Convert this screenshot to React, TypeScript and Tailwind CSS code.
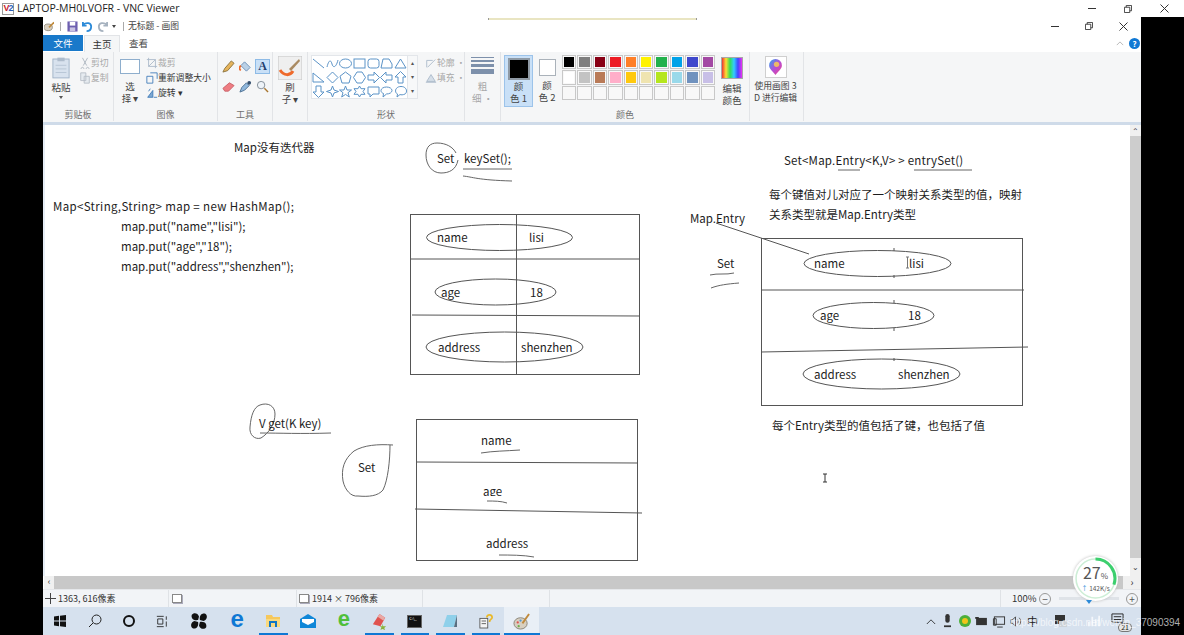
import type { ReactNode } from "react";

const FONT = "[font-family:'Noto_Sans_CJK_SC','Noto_Sans',sans-serif]";

const row1 = ["#000000", "#7f7f7f", "#880015", "#ed1c24", "#ff7f27", "#fff200", "#22b14c", "#00a2e8", "#3f48cc", "#a349a4"];
const row2 = ["#ffffff", "#c3c3c3", "#b97a57", "#ffaec9", "#ffc90e", "#efe4b0", "#b5e61d", "#99d9ea", "#7092be", "#c8bfe7"];
const row3 = Array.from({ length: 10 }, () => "transparent");

// 形状 gallery, each drawn in a 13x13 box
const shapes: ReactNode[] = [
	<path d="M1 2 12 11" />,
	<path d="M1 10C3 2 5 3 6 7s4 4 6-4" />,
	<ellipse cx="6.5" cy="6.5" rx="6" ry="4.5" />,
	<rect x="1" y="2" width="11" height="9" />,
	<rect x="1" y="2" width="11" height="9" rx="2.5" />,
	<path d="M1 11 3 2h6l3 5v4z" />,
	<path d="M6.5 2 12 11H1z" />,
	<path d="M1 2 12 11H1z" />,
	<path d="M6.5 1 12 6.5 6.5 12 1 6.5z" />,
	<path d="M6.5 1 12 5.2 10 12H3L1 5.2z" />,
	<path d="M4 1h5l3.5 5.5L9 12H4L.5 6.5z" />,
	<path d="M1 4h6V1l5.5 5.5L7 12V9H1z" />,
	<path d="M12 4H6V1L.5 6.5 6 12V9h6z" />,
	<path d="M4 12V6H1l5.5-5.5L12 6H9v6z" />,
	<path d="M4 1v6H1l5.5 5.5L12 7H9V1z" />,
	<path d="M6.5 1 8 5l4.5 1.5L8 8l-1.5 4L5 8 .5 6.5 5 5z" />,
	<path d="M6.5 1 8 5h4.5L9 7.7l1.3 4.3-3.8-2.6L2.7 12 4 7.7.5 5H5z" />,
	<path d="M6.5 1 8 3.7h4L10 6.5l2 2.8H8L6.5 12 5 9.3H1l2-2.8-2-2.8h4z" />,
	<path d="M1 2h11v7H6l-3 3V9H1z" />,
	<path d="M6.5 2c3 0 5.5 1.5 5.5 3.5S9.5 9 6.5 9L3 12l.5-3.5C2 8 1 7 1 5.5 1 3.5 3.5 2 6.5 2z" />,
	<path d="M3 3c1-2 7-2 8 0 2 1 2 5 0 6-2 1-4 1-5 .5L3 12l.5-3C1 8 1 4 3 3z" />,
];

function Group({ label, className, children }: { label: string; className: string; children: ReactNode }) {
	return (
		<div className={`flex flex-col border-r border-[#e2e4e7] h-[69px] shrink-0 ${className}`}>
			<div className="flex-1 min-h-0 flex">{children}</div>
			<div className="h-[14px] pt-px text-center text-[9px] leading-[13px] text-[#6f6f6f]">{label}</div>
		</div>
	);
}

function SmallAction({ icon, text, dim }: { icon: ReactNode; text: string; dim?: boolean }) {
	return (
		<div className={`flex items-center h-[15px] text-[8.8px] whitespace-nowrap ${dim ? "text-[#a8a8a8]" : "text-[#333]"}`}>
			<svg viewBox="0 0 14 14" className="w-[12px] h-[12px] shrink-0" fill="none" stroke="#6d8fb5">
				{icon}
			</svg>
			{text}
		</div>
	);
}

function Ribbon() {
	return (
		<div className="h-[70px] bg-[#f5f6f7] border-b-[3px] border-[#cfdbe9] flex box-content text-[#444]">
			<Group label="剪贴板" className="w-[71px]">
				<div className="w-[34px] ml-[1px] flex flex-col items-center pt-[5px]">
					<svg viewBox="0 0 20 24" className="w-[18px] h-[22px]">
						<rect x="1" y="2" width="18" height="21" fill="#d8e2ee" stroke="#9fb1c6" />
						<rect x="6" y="0.5" width="8" height="4" fill="#aebccc" />
						<path d="M4 9h12M4 13h12M4 17h12" stroke="#b6c4d4" />
					</svg>
					<div className="text-[9.5px] leading-[12px] mt-[2px] text-[#444]">粘贴</div>
					<div className="w-0 h-0 mt-[3px] border-x-[2px] border-t-[3px] border-x-transparent border-t-[#555]" />
				</div>
				<div className="flex flex-col pt-[3px] ml-[1px]">
					<SmallAction dim text="剪切" icon={<path d="M4 1l5 9M10 1 5 10M4 12a1.5 1.5 0 1 0 .1 0M10 12a1.5 1.5 0 1 0 .1 0" stroke="#a9b2bc" />} />
					<SmallAction dim text="复制" icon={<path d="M2 1h6v9H2zM6 5h6v8H6z" stroke="#b4bcc6" fill="#e6ebf0" />} />
				</div>
			</Group>
			<Group label="图像" className="w-[104px]">
				<div className="w-[32px] flex flex-col items-center pt-[7px]">
					<div className="w-[20px] h-[15px] border border-[#8eaecd] bg-white" />
					<div className="text-[9.5px] leading-[12px] mt-[6px] text-center text-[#444]">选<br />择 ▾</div>
				</div>
				<div className="flex flex-col pt-[3px]">
					<SmallAction dim text="裁剪" icon={<path d="M3 1v10h10M1 3h10v10M3 11l8-8" stroke="#a9b8c8" />} />
					<SmallAction text="重新调整大小" icon={<path d="M1 5h7v8H1zM5 1h8v7" stroke="#3b78b8" />} />
					<SmallAction text="旋转 ▾" icon={<path d="M2 12 8 4v8zM9 12h4M3 5l2-3" stroke="#3b78b8" fill="#7fa8d2" />} />
				</div>
			</Group>
			<Group label="工具" className="w-[55px]">
				<div className="grid grid-cols-3 grid-rows-2 w-[51px] h-[40px] ml-[2px] mt-[4px] place-items-center">
					<svg viewBox="0 0 14 14" className="w-[13px] h-[13px]"><path d="M1 13 3 9l7-8 3 2.5-7 8z" fill="#e6b45c" stroke="#8a7440" /></svg>
					<svg viewBox="0 0 14 14" className="w-[13px] h-[13px]"><path d="M6 2l6 6-4 4-6-6z" fill="#b9d0e6" stroke="#6d8fb5" /><path d="M2 6C0 8 0 10 2 11" stroke="#ef6a2b" strokeWidth="2" fill="none" /></svg>
					<div className="w-[15px] h-[15px] bg-[#c9e0f7] border border-[#8ebbe6] flex items-center justify-center text-[12px] leading-none font-bold [font-family:'Liberation_Serif',serif] text-[#1f3f6f]">A</div>
					<svg viewBox="0 0 14 14" className="w-[13px] h-[13px]"><path d="M1 9 8 3l5 3-6 6-4 0z" fill="#ee7c82" stroke="#c9636a" /></svg>
					<svg viewBox="0 0 14 14" className="w-[13px] h-[13px]"><path d="M1 13 3 8l5-5 3 3-5 5z" fill="#8fb7dc" stroke="#4d6f92" /><circle cx="11" cy="3" r="2" fill="#36506e" /></svg>
					<svg viewBox="0 0 14 14" className="w-[13px] h-[13px]" fill="none" stroke="#7f8a95"><circle cx="5.5" cy="5.5" r="4" fill="#eef3f8" /><path d="M9 9l4 4" strokeWidth="1.5" stroke="#a8762f" /></svg>
				</div>
			</Group>
			<Group label="" className="w-[35px]">
				<div className="flex flex-col items-center w-full pt-[4px]">
					<svg viewBox="0 0 24 24" className="w-[24px] h-[24px]">
						<rect width="24" height="24" rx="1" fill="#efefef" stroke="#c4c4c4" />
						<path d="M2 14c4 6 10 6 13 1" fill="none" stroke="#ef6a2b" strokeWidth="3" />
						<path d="M11 13 21 3l1 2-9 10z" fill="#a98a62" />
					</svg>
					<div className="text-[9.5px] leading-[12px] mt-[1px] text-center text-[#444]">刷<br />子 ▾</div>
				</div>
			</Group>
			<Group label="形状" className="w-[157px]">
				<div className="flex mt-[3px] ml-[3px] h-[44px]">
					<div className="w-[97px] grid grid-cols-7 bg-white border border-[#e3e6ea] place-items-center">
						{shapes.map((s, i) => (
							<svg key={i} viewBox="0 0 13 13" className="w-[13px] h-[13px]" fill="none" stroke="#5b93c7">
								{s}
							</svg>
						))}
					</div>
					<div className="w-[10px] bg-[#f7f8f9] border border-l-0 border-[#e3e6ea] text-[6px] leading-[14px] text-center text-[#555]">▴<br />▾<br />▾</div>
				</div>
				<div className="flex flex-col ml-[7px] pt-[3px]">
					<SmallAction dim text="轮廓 ·" icon={<path d="M2 12V4h7M3 12l9-9" stroke="#a9b8c8" />} />
					<SmallAction dim text="填充 ·" icon={<path d="M2 11l5-8 5 8zM1 12h12" stroke="#a9b8c8" fill="#d5dee8" />} />
				</div>
			</Group>
			<Group label="" className="w-[36px]">
				<div className="flex flex-col items-center w-full pt-[3px]">
					<div className="w-[23px] flex flex-col gap-[2px] mt-[2px]">
						<div className="h-px bg-[#7d90ab]" />
						<div className="h-[2px] bg-[#7d90ab]" />
						<div className="h-[3px] bg-[#7d90ab]" />
						<div className="h-[5px] bg-[#7d90ab]" />
					</div>
					<div className="text-[9.5px] leading-[12px] mt-[6px] text-center text-[#a8a8a8]">粗<br />细 ·</div>
				</div>
			</Group>
			<Group label="颜色" className="w-[249px]">
				<div className="w-[29px] h-[52px] mt-[3px] ml-[3px] bg-[#c9e0f7] border border-[#9cc3ea] flex flex-col items-center pt-[2px]">
					<div className="w-[22px] h-[22px] bg-black border-[2px] border-[#8f9aa5]" />
					<div className="text-[9.5px] leading-[12px] text-center text-[#444]">颜<br />色 1</div>
				</div>
				<div className="w-[28px] flex flex-col items-center pt-[7px]">
					<div className="w-[17px] h-[17px] bg-white border border-[#aab2ba]" />
					<div className="text-[9.5px] leading-[12px] mt-[3px] text-center text-[#444]">颜<br />色 2</div>
				</div>
				<div className="flex flex-col gap-px mt-[3px] ml-[1px]">
					{[row1, row2, row3].map((colors, r) => (
						<div key={r} className="flex gap-px">
							{colors.map((c, i) => (
								<div key={i} className="w-[14.4px] h-[14.4px] border border-[#c8c8c8] bg-[#f8f8f8] p-px">
									<div className="w-full h-full" style={{ background: c }} />
								</div>
							))}
						</div>
					))}
				</div>
				<div className="w-[30px] ml-[2px] flex flex-col items-center pt-[5px]">
					<div className="w-[22px] h-[22px] border border-[#a8a8a8] bg-[linear-gradient(90deg,#e33,#fd3,#3d5,#3cf,#44f,#e3e)]" />
					<div className="text-[9.5px] leading-[12px] mt-[3px] text-center text-[#444]">编辑<br />颜色</div>
				</div>
			</Group>
			<Group label="" className="w-[54px]">
				<div className="flex flex-col items-center w-full pt-[4px] pr-[2px]">
					<div className="w-[22px] h-[22px] bg-white border border-[#cfcfcf] flex items-center justify-center">
						<svg viewBox="0 0 14 16" className="w-[15px] h-[17px]">
							<defs>
								<linearGradient id="drop" x1="0" y1="0" x2="1" y2="1">
									<stop offset="0" stopColor="#2aa8f0" />
									<stop offset="0.5" stopColor="#b24fd8" />
									<stop offset="1" stopColor="#f4408a" />
								</linearGradient>
							</defs>
							<path d="M7 15C4 11 1 9 1 6a6 6 0 0 1 12 0c0 3-3 5-6 9z" fill="url(#drop)" />
							<circle cx="8" cy="5" r="2.5" fill="#ffd24a" opacity="0.8" />
						</svg>
					</div>
					<div className="text-[8.8px] leading-[12px] mt-[2px] text-center whitespace-nowrap text-[#444]">使用画图 3<br />D 进行编辑</div>
				</div>
			</Group>
			<div className="flex-1" />
		</div>
	);
}

function Canvas() {
	const text = "absolute whitespace-nowrap text-[11.5px] leading-[16px] text-[#1c1c1c]";
	return (
		<div className="relative flex-1 min-w-0 bg-white overflow-hidden ml-[2px]">
			<svg viewBox="45 125 1085 451" className="absolute inset-0 w-full h-full" fill="none" stroke="#555" strokeWidth="1">
				{/* left table */}
				<rect x="410.5" y="214.5" width="229" height="160" />
				<path d="M516.5 215V374M411 259h229M412 315l228 1" />
				<ellipse cx="499.5" cy="237.5" rx="73" ry="13" />
				<ellipse cx="495.5" cy="292" rx="60.5" ry="13" />
				<ellipse cx="504.5" cy="347" rx="78.5" ry="15" />
				<path d="M456 153C453 147 446 143 437 143 430 143 426 147 426 155 426 165 432 173 441 173 449 173 456 170 458 160" stroke="#666" />
				<path d="M463 169h49M463 176c10 1 14 4 49 5" stroke="#666" />
				{/* right table */}
				<rect x="761.5" y="238.5" width="261" height="167" />
				<path d="M761 290h263M761 352l267-5" />
				<ellipse cx="877.5" cy="263.5" rx="73.5" ry="13" />
				<ellipse cx="873.5" cy="315.5" rx="60.5" ry="13" />
				<ellipse cx="881.5" cy="374" rx="78.5" ry="15" />
				<path d="M894 248v3M894 275v3M894 300v3M894 328v3M894 358v3" />
				<path d="M716 223l93 31" />
				<path d="M838 170h22M914 170h58M710 275c8-2 16 0 24-2M711 288c8-3 16-4 28-5" stroke="#666" />
				{/* bottom table */}
				<rect x="416.5" y="419.5" width="221" height="141" />
				<path d="M417 462l221 1M415 509l227 4" />
				<path d="M481 453c12-2 25-2 39-3M487 501c7 0 14 0 20 2M499 555c10 0 25 0 35 2" stroke="#666" />
				{/* V blob and Set blob */}
				<path d="M260 405c-6 2-9 10-10 22-1 8 5 13 11 11 8-5 14-14 14-24 0-8-7-12-15-9z" stroke="#666" />
				<path d="M260 433c20 0 40 1 71 0" stroke="#666" />
				<path d="M393 445c-15-1-29 0-39 6-10 8-13 18-11 30 2 9 8 16 15 15 11 1 20 0 25-6 5-10 7-30 7-45" stroke="#666" />
				{/* text cursors */}
				<path d="M823 474h4M825 474v8M823 482h4" stroke="#333" />
				<path d="M906 257h3M907.5 257v11M906 268h3" stroke="#777" />
			</svg>

			<div className={`${text} left-[189px] top-[14px]`}>Map没有迭代器</div>
			<div className={`${text} left-[392px] top-[25px]`}>Set</div>
			<div className={`${text} left-[419px] top-[25px]`}>keySet();</div>
			<div className={`${text} left-[739px] top-[27px] tracking-[0.2px]`}>Set&lt;Map.Entry&lt;K,V&gt; &gt; entrySet()</div>
			<div className={`${text} left-[724px] top-[61px]`}>每个键值对儿对应了一个映射关系类型的值，映射</div>
			<div className={`${text} left-[724px] top-[81px]`}>关系类型就是Map.Entry类型</div>
			<div className={`${text} left-[645px] top-[85px]`}>Map.Entry</div>
			<div className={`${text} left-[8px] top-[73px] tracking-[0.35px]`}>Map&lt;String,String&gt; map = new HashMap();</div>
			<div className={`${text} left-[76px] top-[93px]`}>map.put("name","lisi");</div>
			<div className={`${text} left-[76px] top-[113px]`}>map.put("age","18");</div>
			<div className={`${text} left-[76px] top-[133px]`}>map.put("address","shenzhen");</div>

			<div className={`${text} left-[392px] top-[104px]`}>name</div>
			<div className={`${text} left-[484px] top-[104px]`}>lisi</div>
			<div className={`${text} left-[396px] top-[159px]`}>age</div>
			<div className={`${text} left-[485px] top-[159px]`}>18</div>
			<div className={`${text} left-[393px] top-[214px]`}>address</div>
			<div className={`${text} left-[476px] top-[214px]`}>shenzhen</div>

			<div className={`${text} left-[672px] top-[130px]`}>Set</div>
			<div className={`${text} left-[769px] top-[130px]`}>name</div>
			<div className={`${text} left-[864px] top-[130px]`}>lisi</div>
			<div className={`${text} left-[775px] top-[182px]`}>age</div>
			<div className={`${text} left-[863px] top-[182px]`}>18</div>
			<div className={`${text} left-[769px] top-[241px]`}>address</div>
			<div className={`${text} left-[853px] top-[241px]`}>shenzhen</div>
			<div className={`${text} left-[727px] top-[292px]`}>每个Entry类型的值包括了键，也包括了值</div>

			<div className={`${text} left-[214px] top-[290px]`}>V get(K key)</div>
			<div className={`${text} left-[313px] top-[334px]`}>Set</div>
			<div className={`${text} left-[436px] top-[307px]`}>name</div>
			<div className={`${text} left-[438px] top-[358px] h-[13px] overflow-hidden`}>age</div>
			<div className={`${text} left-[441px] top-[410px]`}>address</div>
		</div>
	);
}

function Taskbar() {
	const slot = "w-[35.5px] h-full flex items-center justify-center shrink-0";
	const tray = "w-[17px] flex items-center justify-center shrink-0";
	return (
		<div className="relative h-[28px] bg-[#d6e1ee] flex items-center">
			<div className={`${slot} ml-[-1px]`}>
				<svg viewBox="0 0 12 12" className="w-[12px] h-[12px]" fill="#111"><path d="M0 1.5 5 .8V5.5H0zM6 .7 12 0V5.5H6zM0 6.5H5V11.2L0 10.5zM6 6.5H12V12L6 11.3z" /></svg>
			</div>
			<div className={slot}>
				<svg viewBox="0 0 14 14" className="w-[14px] h-[14px]" fill="none" stroke="#222"><circle cx="8.5" cy="5.5" r="4.5" /><path d="M5 9 1 13" /></svg>
			</div>
			<div className={`${slot} ml-[-2px]`}>
				<div className="w-[12px] h-[12px] rounded-full border-[2px] border-[#111]" />
			</div>
			<div className={`${slot} ml-[-2px]`}>
				<svg viewBox="0 0 14 14" className="w-[12px] h-[13px]" fill="none" stroke="#222"><path d="M1 1h8M1 13h8M2 4h6v6H2zM12 1v4M12 7v6" /></svg>
			</div>
			<div className={`${slot} ml-[1px]`}>
				<svg viewBox="0 0 20 20" className="w-[18px] h-[18px]" fill="#111"><path d="M9 9C3 10 1 6 2 3c2-3 7-2 8 2zM11 9c-1-6 3-8 6-7 3 2 2 7-2 8zM11 11c6-1 8 3 7 6-2 3-7 2-8-2zM9 11c1 6-3 8-6 7-3-2-2-7 2-8z" /></svg>
			</div>
			<div className={`${slot} ml-[3px]`}>
				<div className="text-[24px] leading-none font-bold text-[#0f78d4] [font-family:'Liberation_Sans',sans-serif] mt-[-5px]">e</div>
			</div>
			<div className={slot}>
				<svg viewBox="0 0 16 16" className="w-[16px] h-[16px]"><path d="M1 2h6l1 2h7v10H1z" fill="#f6c85c" /><path d="M1 6h14v8H1z" fill="#f9d97f" /><path d="M5 14V9h6v5" fill="none" stroke="#1177c4" strokeWidth="2" /></svg>
			</div>
			<div className={slot}>
				<svg viewBox="0 0 18 16" className="w-[18px] h-[16px]"><path d="M1 6 9 1l8 5v9H1z" fill="#0f87d8" /><path d="M3 6h12v3l-6 3-6-3z" fill="#fff" /></svg>
			</div>
			<div className={slot}>
				<div className="text-[22px] leading-none font-bold text-[#4fbf3a] [font-family:'Liberation_Sans',sans-serif] mt-[-5px]">e</div>
			</div>
			<div className={slot}>
				<svg viewBox="0 0 18 18" className="w-[17px] h-[17px]"><path d="M2 12 9 1l6 4-5 9z" fill="#e0534f" /><path d="M9 1l6 4-2 3-6-4z" fill="#e9a9a5" /><path d="M12 11l1 3 3 0-2 2 1 2-3-1-2 1 1-3-2-1 3 0z" fill="#8ab33c" /></svg>
			</div>
			<div className={slot}>
				<div className="w-[15px] h-[13px] bg-[#111] border border-[#666] text-[4px] leading-[5px] text-white pl-px">C:\_</div>
			</div>
			<div className={slot}>
				<svg viewBox="0 0 16 16" className="w-[16px] h-[16px]"><path d="M1 14 5 2h10l-3 12z" fill="#8fd0ea" /><path d="M12 14l3-12v12z" fill="#5a6f80" /></svg>
			</div>
			<div className={slot}>
				<svg viewBox="0 0 16 18" className="w-[14px] h-[16px]"><rect x="1" y="6" width="9" height="11" fill="#f4f4f4" stroke="#555" /><path d="M3 9h5M3 12h5" stroke="#555" /><path d="M9 5c0-4 6-4 6 0 0 2-3 2-3 5" fill="none" stroke="#e9b92c" strokeWidth="2" /></svg>
			</div>
			<div className={`${slot} bg-[#e9eff6]`}>
				<svg viewBox="0 0 18 18" className="w-[17px] h-[17px]"><ellipse cx="8" cy="11" rx="7" ry="6" fill="#d8cfc0" stroke="#8a8578" /><circle cx="5" cy="10" r="1.2" fill="#e0534f" /><circle cx="8" cy="8" r="1.2" fill="#4f9bd8" /><circle cx="6" cy="14" r="1.2" fill="#6bb04a" /><path d="M10 11 17 1" stroke="#c08a3c" strokeWidth="2" /></svg>
			</div>

			{/* tray, centres run at 17px steps */}
			<div className="ml-auto flex items-center h-full pr-[15px]">
				<div className={tray}><svg viewBox="0 0 12 8" className="w-[10px] h-[7px]" fill="none" stroke="#222"><path d="M1 7 6 2l5 5" /></svg></div>
				<div className={tray}><svg viewBox="0 0 10 16" className="w-[9px] h-[14px]" fill="#333"><rect x="2.5" y="0" width="5" height="10" rx="2.5" /><path d="M1 13h8v2H1z" /></svg></div>
				<div className={tray}><svg viewBox="0 0 14 14" className="w-[12px] h-[12px]"><circle cx="7" cy="7" r="7" fill="#4caf3a" /><circle cx="7" cy="7" r="3.5" fill="#f0c419" /></svg></div>
				<div className={tray}><svg viewBox="0 0 14 10" className="w-[13px] h-[9px]" fill="#333"><rect x="1" y="1" width="12" height="8" /><rect x="0" y="0" width="4" height="2" /></svg></div>
				<div className={tray}><svg viewBox="0 0 14 14" className="w-[14px] h-[13px]" fill="none" stroke="#333"><rect x="2" y="2" width="11" height="8" /><path d="M1 4h3v7H1zM5 13h6" /></svg></div>
				<div className={tray}><svg viewBox="0 0 14 14" className="w-[13px] h-[13px]" fill="none" stroke="#444"><path d="M2 5h2l3-3v10L4 9H2zM9 5c1 1 1 3 0 4M11 3c2 2 2 6 0 8" /></svg></div>
				<div className={`${tray} text-[11px] leading-none text-[#222]`}>中</div>
				<div className={`${tray} ml-[11px]`}><svg viewBox="0 0 14 14" className="w-[14px] h-[14px]" fill="#333"><path d="M1 1h10v9H1z" /><path d="M5 7h8v6H5z" fill="#ccd2d8" /></svg></div>
				<div className={`${tray} ml-[16px]`}><svg viewBox="0 0 16 14" className="w-[16px] h-[12px]" fill="#f4f7fb"><path d="M1 13V8h2v5zM5 13V2h2v11zM9 13V5h2v8zM13 13V1h2v12z" /></svg></div>
				<div className={`${tray} ml-[7px]`}><svg viewBox="0 0 14 14" className="w-[13px] h-[13px] mt-[-4px]" fill="none" stroke="#222"><path d="M1 1h12v9H1zM3 4h8M3 7h8" /></svg></div>
			</div>
			<div className="absolute right-[9px] bottom-[3px] text-[7px] leading-[7px] px-[2px] rounded-[4px] bg-[#e6e6e6] border border-[#777] text-[#222]">21</div>

			{/* running app underlines */}
			<div className="absolute left-[216px] bottom-0 w-[29px] h-[2px] bg-[#0f78d4]" />
			<div className="absolute left-[322px] bottom-0 w-[29px] h-[2px] bg-[#0f78d4]" />
			<div className="absolute left-[358px] bottom-0 w-[28px] h-[2px] bg-[#0f78d4]" />
			<div className="absolute left-[393px] bottom-0 w-[29px] h-[2px] bg-[#0f78d4]" />
			<div className="absolute left-[429px] bottom-0 w-[28px] h-[2px] bg-[#0f78d4]" />
			<div className="absolute left-[461px] bottom-0 w-[36px] h-[2px] bg-[#0f78d4]" />
		</div>
	);
}

function WinButtons({ small }: { small?: boolean }) {
	const w = small ? "w-[34px]" : "w-[36px]";
	return (
		<>
			<div className={`${w} flex justify-center`}>
				<div className="w-[8px] h-px bg-[#333]" />
			</div>
			<div className={`${w} flex justify-center`}>
				<svg viewBox="0 0 9 9" className="w-[8px] h-[8px]" fill="none" stroke="#333"><path d="M.5 2.5h6v6h-6zM2.5 2.5v-2h6v6h-2" /></svg>
			</div>
			<div className={`${w} flex justify-center`}>
				<svg viewBox="0 0 9 9" className="w-[9px] h-[9px]" fill="none" stroke="#333"><path d="M.5.5l8 8M8.5.5l-8 8" /></svg>
			</div>
		</>
	);
}

export default function App() {
	return (
		<div className={`relative w-[1184px] h-[635px] bg-white flex flex-col overflow-hidden ${FONT}`}>
			{/* VNC title bar */}
			<div className="h-[17px] shrink-0 flex items-center bg-white">
				<div className="ml-[2px] w-[12px] h-[12px] border border-[#999] bg-white flex items-center justify-center text-[9px] leading-none font-bold tracking-[-1px] [font-family:'Liberation_Sans',sans-serif]">
					<span className="text-[#c8202a]">V</span>
					<span className="text-[#2a5fb8]">2</span>
				</div>
				<span className="ml-[3px] text-[10.5px] text-[#222] whitespace-nowrap [font-family:'Open_Sans',sans-serif]">LAPTOP-MH0LVOFR - VNC Viewer</span>
				<div className="ml-auto flex items-center mr-[2px]">
					<WinButtons />
				</div>
			</div>

			<div className="flex-1 min-h-0 flex">
				<div className="w-[43px] bg-black shrink-0" />
				<div className="flex-1 min-w-0 flex flex-col bg-white">
					{/* paint title row */}
					<div className="relative h-[18px] shrink-0 flex items-center text-[#333]">
						<svg viewBox="0 0 12 12" className="w-[10px] h-[11px] ml-[1px]"><ellipse cx="5" cy="7" rx="5" ry="4" fill="#d8cfc0" stroke="#8a8578" /><path d="M6 7 12 1" stroke="#c08a3c" strokeWidth="2" /></svg>
						<div className="w-px h-[9px] bg-[#aaa] mx-[6px]" />
						<svg viewBox="0 0 12 12" className="w-[11px] h-[11px] mr-[4px]"><rect x="0.5" y="0.5" width="11" height="11" fill="#6d5fb0" /><rect x="3" y="1" width="6" height="4" fill="#fff" /><rect x="3" y="7" width="6" height="4" fill="#c9c3e4" /></svg>
						<svg viewBox="0 0 12 12" className="w-[11px] h-[11px] mr-[4px]" fill="none" stroke="#2c8ad8" strokeWidth="2"><path d="M1 4c4-3 9-2 9 2s-3 5-5 5M1 1v4h4" /></svg>
						<svg viewBox="0 0 12 12" className="w-[11px] h-[11px] mr-[4px]" fill="none" stroke="#a6b2bf" strokeWidth="2"><path d="M11 4C7 1 2 2 2 6s3 5 5 5M11 1v4H7" /></svg>
						<div className="w-0 h-0 border-x-[2px] border-t-[3px] border-x-transparent border-t-[#444]" />
						<div className="w-px h-[9px] bg-[#aaa] ml-[7px] mr-[4px]" />
						<span className="text-[8.8px] text-[#444]">无标题 - 画图</span>
						<div className="ml-auto flex items-center mr-[1px]">
							<WinButtons small />
						</div>
						{/* stray stroke from the remote desktop */}
						<div className="absolute left-[445px] top-[1px] w-[209px] h-[2px] bg-[#e9e5c2] border-x border-[#999]" />
					</div>

					{/* tabs */}
					<div className="h-[17px] shrink-0 flex items-start text-[9.5px] relative">
						<div className="w-[40px] h-[16px] bg-[#1979ca] text-white flex items-center justify-center">文件</div>
						<div className="w-[36px] h-[17px] ml-[1px] bg-[#f5f6f7] border-x border-t border-[#e2e4e7] flex items-center justify-center text-[#333]">主页</div>
						<div className="w-[39px] h-[16px] ml-[-1px] flex items-center justify-center text-[#444]">查看</div>
						<div className="ml-auto flex items-center gap-[5px] mr-[1px] h-[16px]">
							<svg viewBox="0 0 10 6" className="w-[8px] h-[5px]" fill="none" stroke="#aaa"><path d="M1 5 5 1l4 4" /></svg>
							<div className="w-[11px] h-[11px] rounded-full bg-[#0f78d4] text-white text-[8px] leading-[11px] text-center font-bold">?</div>
						</div>
					</div>

					<Ribbon />

					{/* canvas and scrollbars */}
					<div className="flex-1 min-h-0 flex flex-col">
						<div className="flex-1 min-h-0 flex bg-[#e6edf5]">
							<Canvas />
							<div className="w-[11px] shrink-0 bg-[#cdcdcd] flex flex-col items-center justify-between text-[8px] leading-[11px] text-[#444]">
								<div className="w-full bg-[#f0f0f0] text-center h-[11px]">⌃</div>
								<div className="w-full bg-[#f0f0f0] text-center h-[18px] pt-[3px]">⌄</div>
							</div>
						</div>
						<div className="h-[13px] shrink-0 flex items-stretch ml-[1px] bg-[#c8c8c8]">
							<div className="w-[10px] bg-[#f0f0f0] text-[9px] leading-[12px] text-center text-[#333]">‹</div>
							<div className="flex-1" />
							<div className="w-[18px] bg-[#f0f0f0] text-[10px] leading-[12px] text-center text-[#333]">›</div>
						</div>
					</div>

					{/* status bar */}
					<div className="h-[18px] shrink-0 bg-[#f2f4f7] flex items-center text-[9px] text-[#333] border-t border-[#e5e7ea]">
						<div className="w-[126px] h-full border-r border-[#dfe2e6] flex items-center pl-[2px] gap-[2px]">
							<svg viewBox="0 0 11 11" className="w-[11px] h-[11px]" fill="none" stroke="#444"><path d="M5.5 0v11M0 5.5h11" /></svg>
							1363, 616像素
						</div>
						<div className="w-[128px] h-full border-r border-[#dfe2e6] flex items-center pl-[3px]">
							<div className="w-[10px] h-[9px] border border-[#888] bg-white shadow-[1px_1px_0_#aab]" />
						</div>
						<div className="w-[126px] h-full border-r border-[#dfe2e6] flex items-center pl-[2px] gap-[3px]">
							<div className="w-[10px] h-[9px] border border-[#888] bg-white shadow-[1px_1px_0_#aab]" />
							1914 × 796像素
						</div>
						<div className="w-[127px] h-full border-r border-[#dfe2e6]" />
						<div className="w-[451px] h-full border-r border-[#dfe2e6]" />
						<div className="flex-1 h-full flex items-center pl-[11px]">
							<span className="text-[9.5px] w-[27px] shrink-0">100%</span>
							<div className="w-[12px] h-[12px] shrink-0 rounded-full border border-[#999] text-[#555] text-[10px] leading-[10px] text-center">−</div>
							<div className="w-[60px] h-[3px] shrink-0 bg-[#dfe3e8] ml-[8px]" />
							<div className="w-[12px] h-[12px] shrink-0 rounded-full border border-[#999] text-[#555] text-[10px] leading-[10px] text-center ml-[7px]">+</div>
						</div>
					</div>

					<Taskbar />
				</div>
				<div className="w-[43px] bg-black shrink-0" />
			</div>

			{/* network speed widget over the window */}
			<div className="absolute left-[1073px] top-[556px] w-[45px] h-[45px] rounded-full bg-white shadow-[0_0_3px_#bbb] flex items-center justify-center">
				<svg viewBox="0 0 44 44" className="absolute inset-0 w-full h-full" fill="none">
					<circle cx="22" cy="22" r="19" stroke="#cdeed6" strokeWidth="1.5" />
					<path d="M22 3a19 19 0 0 1 18 25" stroke="#3ccf6e" strokeWidth="3" />
				</svg>
				<div className="relative flex flex-col items-center text-[#555] mt-[-1px]">
					<div className="text-[16px] leading-[17px] whitespace-nowrap">27<span className="text-[8px]">%</span></div>
					<div className="text-[6.5px] leading-[8px] whitespace-nowrap"><span className="text-[#2c8ad8]">↑</span> 142K/s</div>
				</div>
			</div>
			<div className="absolute left-[1086px] top-[600px] w-0 h-0 border-x-[3px] border-t-[4px] border-x-transparent border-t-[#2c8ad8]" />

			{/* blog watermark */}
			<div className="absolute left-[1010px] top-[617px] text-[10px] leading-[12px] whitespace-nowrap text-[#ffffffb0] [font-family:'Liberation_Sans',sans-serif]">
				https://blog.csdn.net/weixin_37090394
			</div>
		</div>
	);
}
